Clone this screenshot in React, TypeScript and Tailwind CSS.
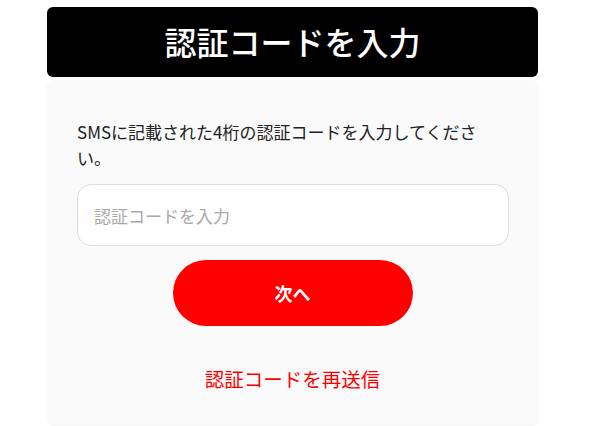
export default function App() {
  const font = { fontFamily: '"Noto Sans CJK JP", "Noto Sans", sans-serif' };
  return (
    <div className="min-h-[426px] bg-white pl-[47px] pt-[7px]" style={font}>
      <div className="flex w-[491px] flex-col">
        <div className="flex h-[70px] items-center justify-center rounded-[6px] bg-black pb-[2px]">
          <h1 className="text-[32px] font-medium leading-none text-white">認証コードを入力</h1>
        </div>
        <div className="mt-[3px] flex h-[345px] flex-col rounded-[8px] bg-[#fafafa] px-[30px] pt-[39px] shadow-[0_1px_3px_rgba(0,0,0,0.06)]">
          <p className="w-[412px] text-[17px] leading-[26px] text-[#222]">
            SMSに記載された4桁の認証コードを入力してください。
          </p>
          <input
            type="text"
            placeholder="認証コードを入力"
            className="mt-[13px] h-[62px] w-[432px] rounded-[14px] border border-[#dddddd] bg-white px-[16px] text-[17px] text-[#222] outline-none placeholder:text-[#a8a8a8]"
            style={font}
          />
          <button
            className="mx-auto mt-[14px] flex h-[66px] w-[240px] items-center justify-center rounded-full bg-[#ff0000] text-[18px] font-bold text-white"
            style={font}
          >
            次へ
          </button>
          <button
            className="mx-auto mt-[39px] text-[19.5px] leading-[28px] text-[#ff0000]"
            style={font}
          >
            認証コードを再送信
          </button>
        </div>
      </div>
    </div>
  );
}
